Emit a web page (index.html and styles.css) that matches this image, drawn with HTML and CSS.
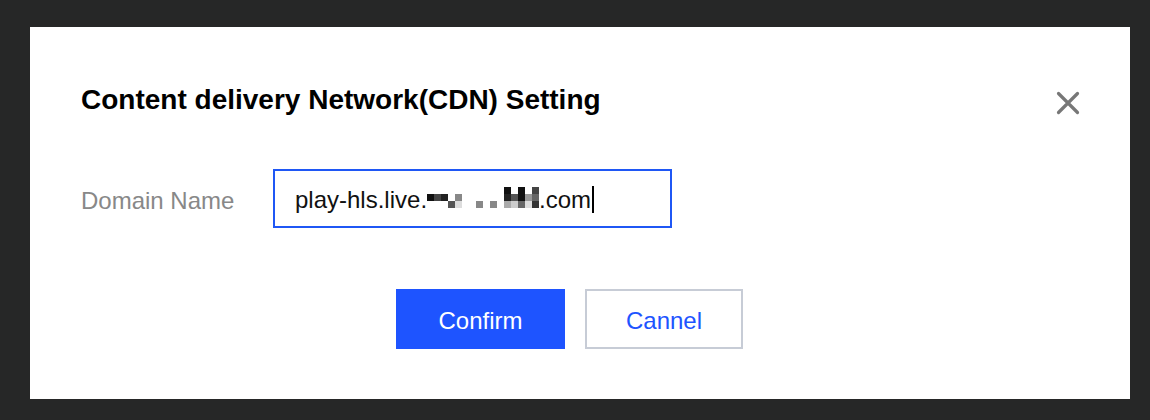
FILE: index.html
```html
<!DOCTYPE html>
<html>
<head>
<meta charset="utf-8">
<link rel="stylesheet" href="styles.css">
</head>
<body>
<div class="dialog">
  <h2 class="title">Content delivery Network(CDN) Setting</h2>
  <button class="close" aria-label="close">
    <svg width="24" height="24" viewBox="0 0 24 24"><path d="M2.5 2.5 L21.5 21.5 M21.5 2.5 L2.5 21.5" stroke="#777" stroke-width="3.2" stroke-linecap="round" fill="none"/></svg>
  </button>
  <div class="row">
    <label class="label">Domain Name</label>
    <div class="input">play-hls.live.<span class="mosaic"><span class="grid">
      <i></i><i></i><i></i><i></i><i></i><i></i><i></i><i></i><i></i><i></i><i></i><i class="k1"></i><i></i><i class="k1"></i><i></i><i class="k4"></i>
      <i class="k1"></i><i class="k4"></i><i class="k2"></i><i></i><i class="k8"></i><i></i><i></i><i></i><i></i><i></i><i></i><i class="k2"></i><i class="k5"></i><i class="k1"></i><i class="k9"></i><i class="k6"></i>
      <i></i><i></i><i></i><i class="k5"></i><i class="kd"></i><i></i><i></i><i class="k8"></i><i></i><i class="k8"></i><i></i><i class="ka"></i><i class="kc"></i><i class="k6"></i><i class="kd"></i><i class="k3"></i>
    </span></span>.com<span class="caret"></span></div>
  </div>
  <div class="actions">
    <button class="btn primary">Confirm</button>
    <button class="btn ghost">Cannel</button>
  </div>
</div>
</body>
</html>
```

FILE: styles.css
```css
html, body {
  margin: 0;
  padding: 0;
  background: #262727;
  width: 1150px;
  height: 420px;
  overflow: hidden;
  font-family: "Liberation Sans", Arial, sans-serif;
}
.dialog {
  position: relative;
  box-sizing: border-box;
  width: 1100px;
  height: 372px;
  margin: 27px 0 0 30px;
  background: #fff;
  padding: 53px 0 0 51px;
}
.title {
  margin: 0;
  font-size: 28px;
  line-height: 40px;
  font-weight: bold;
  color: #000;
}
.close {
  position: absolute;
  top: 64px;
  right: 50px;
  width: 24px;
  height: 24px;
  padding: 0;
  border: 0;
  background: none;
}
.close svg { display: block; }
.row {
  display: flex;
  align-items: center;
  margin-top: 49px;
}
.label {
  width: 192px;
  font-size: 24px;
  color: #888;
  line-height: 30px;
  padding-top: 4px;
}
.input {
  box-sizing: border-box;
  width: 399px;
  height: 59px;
  border: 2px solid #1f57f5;
  padding: 2px 0 0 20px;
  font-size: 24px;
  line-height: 53px;
  color: #111;
  white-space: nowrap;
}
.mosaic {
  display: inline-block;
  overflow: hidden;
  vertical-align: baseline;
}
.grid {
  display: grid;
  grid-template-columns: repeat(16, 7px);
  grid-template-rows: repeat(3, 7px);
}
.grid i { display: block; }
.k1 { background: #111; }
.k2 { background: #222; }
.k3 { background: #333; }
.k4 { background: #444; }
.k5 { background: #555; }
.k6 { background: #666; }
.k8 { background: #888; }
.k9 { background: #999; }
.ka { background: #aaa; }
.kc { background: #ccc; }
.kd { background: #ddd; }
.caret {
  display: inline-block;
  width: 2px;
  height: 27px;
  background: #000;
  margin-left: 1px;
  vertical-align: -5px;
}
.actions {
  display: flex;
  gap: 20px;
  margin-top: 61px;
  padding-left: 315px;
}
.btn {
  box-sizing: border-box;
  height: 60px;
  font-family: "Liberation Sans", Arial, sans-serif;
  font-size: 24px;
  padding: 4px 0 0;
  cursor: pointer;
}
.primary {
  width: 169px;
  background: #1e54ff;
  color: #fff;
  border: 0;
}
.ghost {
  width: 158px;
  background: #fff;
  color: #1e54ff;
  border: 2px solid #c7ccd6;
}
```
